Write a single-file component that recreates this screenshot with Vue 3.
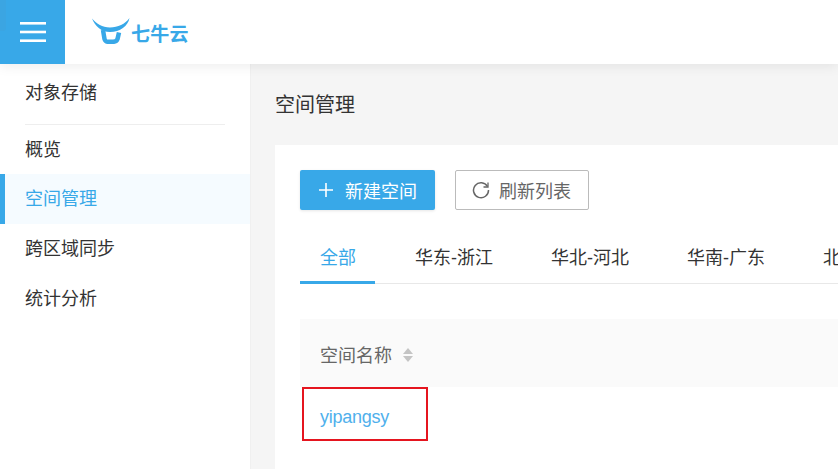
<template>
  <div class="page">
    <header class="top-bar">
      <button class="menu-button" aria-label="菜单">
        <svg viewBox="0 0 26 20" width="26" height="20" fill="#fff">
          <rect y="0" width="26" height="2.600" />
          <rect y="8.700" width="26" height="2.600" />
          <rect y="17.400" width="26" height="2.600" />
        </svg>
      </button>
      <div class="logo">
        <svg class="logo-mark" viewBox="0 0 38 26" width="38" height="26" fill="#38a8e8">
          <path d="M0 0.500C5 6 10 9 18 9.500C26 9.500 33 6 37.500 0C36 8 28 14 18 14C9 14 3 8 0 0.500Z" />
          <path d="M11 12L12.500 21Q13.300 23.800 16 23.800H21Q24.500 23.800 25.500 21L27 14.500" fill="none" stroke="#38a8e8" stroke-width="4.500" />
        </svg>
        <span class="logo-text">七牛云</span>
      </div>
    </header>
    <div class="body">
      <aside class="sidebar">
        <div class="side-title">对象存储</div>
        <ul class="side-menu">
          <li v-for="item in menu" :key="item" :class="{ active: item === current }">{{ item }}</li>
        </ul>
      </aside>
      <main class="main">
        <h1 class="page-title">空间管理</h1>
        <section class="card">
          <div class="actions">
            <button class="btn btn-primary">
              <svg viewBox="0 0 14 14" width="14" height="14" stroke="#fff" stroke-width="1.600">
                <path d="M7 0V14M0 7H14" />
              </svg>
              新建空间
            </button>
            <button class="btn btn-default">
              <svg viewBox="0 0 18 18" width="18" height="18" fill="none" stroke="#666" stroke-width="1.500">
                <path d="M15.500 5.500A7.500 7.500 0 1 0 16.500 9" />
                <path d="M16 1.500V6H11.500" stroke-width="1.300" />
              </svg>
              刷新列表
            </button>
          </div>
          <div class="tabs">
            <div v-for="(tab, i) in tabs" :key="tab" class="tab" :class="{ active: i === 0 }">{{ tab }}</div>
          </div>
          <div class="table-head">
            <span class="head-label">空间名称</span>
            <span class="sort">
              <i class="up"></i>
              <i class="down"></i>
            </span>
          </div>
          <div class="table-row">
            <a class="bucket">yipangsy</a>
            <div class="highlight"></div>
          </div>
        </section>
      </main>
    </div>
  </div>
</template>

<script setup>
const menu = ['概览', '空间管理', '跨区域同步', '统计分析']
const current = '空间管理'
const tabs = ['全部', '华东-浙江', '华北-河北', '华南-广东', '北美-洛杉矶']
</script>

<style>
html,
body {
  margin: 0;
  overflow: hidden;
}
</style>

<style scoped>
.page {
  width: 838px;
  height: 469px;
  overflow: hidden;
  display: flex;
  flex-direction: column;
  background: #f5f5f5;
  color: #333;
  font-family: 'Liberation Sans', 'Noto Sans CJK SC', sans-serif;
  font-size: 18px;
}

.top-bar {
  position: relative;
  z-index: 2;
  flex: none;
  height: 64px;
  display: flex;
  align-items: center;
  background: #fff;
  box-shadow: 0 2px 12px rgba(0, 0, 0, 0.08);
}

.menu-button {
  position: relative;
  width: 65px;
  height: 64px;
  padding: 0;
  border: none;
  background: #38a8e8;
  display: flex;
  align-items: center;
  justify-content: center;
}

/* darker smudge in the corner of the button */
.menu-button::before {
  content: '';
  position: absolute;
  left: 0;
  top: 0;
  width: 6px;
  height: 31px;
  border-bottom-right-radius: 3px;
  background: #3ba5e2;
}

.logo {
  margin-left: 27px;
  display: flex;
  align-items: center;
}

.logo-mark {
  margin-top: -3px;
}

.logo-text {
  margin-left: 1px;
  margin-top: 1px;
  font-size: 19px;
  font-weight: 700;
  letter-spacing: 0.3px;
  color: #38a8e8;
}

.body {
  flex: 1;
  display: flex;
  min-height: 0;
}

.sidebar {
  flex: none;
  width: 251px;
  background: #fff;
  border-right: 1px solid #f0f0f0;
  box-sizing: border-box;
}

.side-title {
  height: 61px;
  margin: 0 25px;
  line-height: 58px;
  border-bottom: 1px solid #eee;
  box-sizing: border-box;
}

.side-menu {
  list-style: none;
  margin: 0;
  padding: 0;
}

.side-menu li {
  height: 50px;
  line-height: 51px;
  padding-left: 25px;
}

.side-menu li:first-child {
  height: 49px;
}

.side-menu li.active {
  padding-left: 20px;
  border-left: 5px solid #38a8e8;
  line-height: 50px;
  background: #f5fbff;
  color: #38a8e8;
}

.main {
  flex: 1;
  min-width: 0;
  padding-left: 24px;
}

.page-title {
  margin: 0;
  height: 81px;
  line-height: 82px;
  font-size: 20px;
  font-weight: 400;
}

.card {
  width: 600px;
  height: 400px;
  padding: 25px;
  background: #fff;
}

.actions {
  display: flex;
  gap: 20px;
}

.btn {
  height: 40px;
  display: flex;
  align-items: center;
  box-sizing: border-box;
  border-radius: 2px;
  font-family: inherit;
  font-size: 18px;
}

.btn-primary {
  width: 135px;
  padding: 0 0 0 19px;
  gap: 12px;
  border: none;
  background: #38a8e8;
  color: #fff;
  box-shadow: 0 1px 3px rgba(0, 0, 0, 0.1);
}

.btn-default {
  width: 134px;
  padding: 0 0 0 16px;
  gap: 9px;
  border: 1px solid #bbb;
  background: #fff;
  color: #666;
}

.tabs {
  margin-top: 20px;
  height: 54px;
  display: flex;
  gap: 18px;
  border-bottom: 1px solid #e8e8e8;
  box-sizing: border-box;
  white-space: nowrap;
}

.tab {
  flex: none;
  height: 54px;
  line-height: 56px;
  padding: 0 20px;
  box-sizing: border-box;
}

.tab.active {
  width: 75px;
  padding: 0 0 0 20px;
  margin-right: 2px;
  border-bottom: 3px solid #38a8e8;
  color: #38a8e8;
}

.table-head {
  margin-top: 35px;
  height: 68px;
  padding-left: 20px;
  display: flex;
  align-items: center;
  gap: 11px;
  background: #fafafa;
  color: #666;
}

.head-label {
  margin-top: 1px;
}

.sort {
  display: flex;
  flex-direction: column;
  gap: 2px;
  margin-top: 3px;
}

.sort i {
  width: 0;
  height: 0;
  border-left: 5px solid transparent;
  border-right: 5px solid transparent;
}

.sort .up {
  border-bottom: 6px solid #c4c4c4;
}

.sort .down {
  border-top: 6px solid #c4c4c4;
}

.table-row {
  position: relative;
  height: 60px;
  padding: 20px 0 0 20px;
  box-sizing: border-box;
}

.bucket {
  color: #4fb0ec;
  letter-spacing: -0.25px;
}

.highlight {
  position: absolute;
  left: 2px;
  top: 0;
  width: 126px;
  height: 54px;
  box-sizing: border-box;
  border: 2px solid #e5151f;
}
</style>
